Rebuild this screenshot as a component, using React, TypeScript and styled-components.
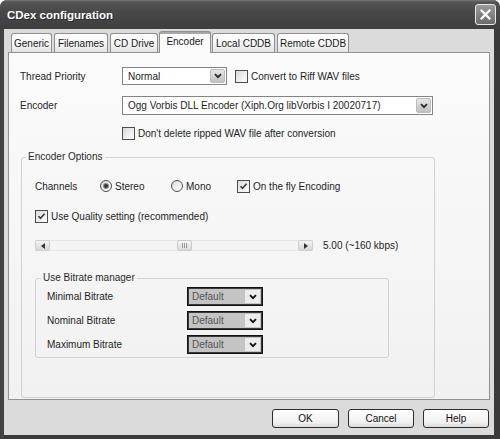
import React from "react";
import styled, { createGlobalStyle } from "styled-components";

const GlobalStyle = createGlobalStyle`
  html, body { margin: 0; padding: 0; background: #ffffff; }
  body { font-family: "Liberation Sans", Arial, sans-serif; font-size: 10px; color: #1e1e1e; }
  * { box-sizing: border-box; }
`;

const Window = styled.div`
  width: 500px;
  height: 439px;
  display: flex;
  flex-direction: column;
  background: linear-gradient(90deg, #3c3c3c, #4a4a4a 2px, #3a3a3a 4px);
  border-radius: 7px 7px 0 0;
  overflow: hidden;
`;

const TitleBar = styled.div`
  height: 29px;
  flex: none;
  display: flex;
  align-items: center;
  justify-content: space-between;
  padding: 0 4px 0 7px;
  background: linear-gradient(#7a7a7a 0px, #555 2px, #484848 40%, #3e3e3e 100%);
`;

const Title = styled.div`
  color: #fff;
  font-weight: bold;
  font-size: 11.5px;
  text-shadow: 1px 1px 0 #2a2a2a;
`;

const CloseButton = styled.div`
  width: 21px;
  height: 21px;
  border: 1px solid #e8e8e8;
  border-radius: 3px;
  background: linear-gradient(#9a9a9a, #6c6c6c);
  display: flex;
  align-items: center;
  justify-content: center;
`;

const Body = styled.div`
  flex: 1;
  margin: 0 6px 4px 4px;
  background: #dbdbdb;
  padding: 2px 4px 0 4px;
  display: flex;
  flex-direction: column;
`;

const TabRow = styled.div`
  height: 21px;
  display: flex;
  align-items: flex-end;
  padding-left: 3px;
`;

const Tab = styled.div<{ $w: number; $active?: boolean }>`
  position: relative;
  z-index: ${(p) => (p.$active ? 2 : 1)};
  width: ${(p) => p.$w + (p.$active ? 2 : 0)}px;
  height: ${(p) => (p.$active ? 22 : 19)}px;
  margin: ${(p) => (p.$active ? "0 1px -1px -1px" : "0 2px 0 0")};
  padding-bottom: ${(p) => (p.$active ? 3 : 0)}px;
  border: 1px solid #8e8e8e;
  border-bottom: none;
  border-radius: 3px 3px 0 0;
  background: ${(p) =>
    p.$active
      ? "linear-gradient(#a8a8a8 0px, #a8a8a8 2px, #fcfcfc 2px, #fbfbfb 100%)"
      : "linear-gradient(#ffffff, #f3f3f3 60%, #e4e4e4)"};
  display: flex;
  align-items: center;
  justify-content: center;
  font-size: 10px;
  color: #1a1a1a;
  white-space: nowrap;
`;

const Panel = styled.div`
  height: 348px;
  border: 1px solid #929292;
  background: linear-gradient(#fbfbfb, #f1f1f1);
  padding: 14px 0 0 11px;
  display: flex;
  flex-direction: column;
`;

const FormRow = styled.div<{ $mt?: number; $h: number; $indent?: number }>`
  display: flex;
  align-items: center;
  height: ${(p) => p.$h}px;
  margin-top: ${(p) => p.$mt ?? 0}px;
  padding-left: ${(p) => p.$indent ?? 0}px;
`;

const FieldLabel = styled.span<{ $w: number }>`
  width: ${(p) => p.$w}px;
  flex: none;
  white-space: nowrap;
`;

const Combo = styled.div<{ $w: number; $h: number }>`
  width: ${(p) => p.$w}px;
  height: ${(p) => p.$h}px;
  flex: none;
  border: 1px solid #858585;
  background: #ffffff;
  display: flex;
  align-items: stretch;
  padding: 1px;
`;

const ComboText = styled.span`
  flex: 1;
  display: flex;
  align-items: center;
  padding-left: 4px;
  white-space: nowrap;
  overflow: hidden;
`;

const ComboArrow = styled.span`
  width: 15px;
  flex: none;
  border: 1px solid #bcbcbc;
  border-radius: 2px;
  background: linear-gradient(#e6e6e6, #c0c0c0);
  display: flex;
  align-items: center;
  justify-content: center;
`;

const DarkCombo = styled.div`
  width: 76px;
  height: 19px;
  flex: none;
  border: 1px solid #111;
  box-shadow: inset 0 0 0 1px #3a3a3a;
  display: flex;
  align-items: stretch;
  padding: 2px;
  background: #c4c4c4;
`;

const DarkComboText = styled.span`
  flex: 1;
  display: flex;
  align-items: center;
  padding-left: 2px;
  color: #555;
`;

const DarkComboArrow = styled.span`
  width: 15px;
  flex: none;
  background: #ececec;
  display: flex;
  align-items: center;
  justify-content: center;
`;

const Option = styled.label<{ $w?: number; $ml?: number }>`
  display: flex;
  align-items: center;
  gap: 3px;
  width: ${(p) => (p.$w ? `${p.$w}px` : "auto")};
  margin-left: ${(p) => p.$ml ?? 0}px;
  flex: none;
  white-space: nowrap;
`;

const CheckBox = styled.span`
  width: 13px;
  height: 13px;
  flex: none;
  border: 1px solid #4c4c4c;
  background: linear-gradient(135deg, #d9d9d9, #f4f4f4 70%, #fdfdfd);
  display: flex;
  align-items: center;
  justify-content: center;
`;

const Radio = styled.span`
  width: 12px;
  height: 12px;
  flex: none;
  border: 1px solid #4c4c4c;
  border-radius: 50%;
  background: linear-gradient(135deg, #d9d9d9, #f6f6f6 70%, #ffffff);
  display: flex;
  align-items: center;
  justify-content: center;
`;

const RadioDot = styled.span`
  width: 4px;
  height: 4px;
  border-radius: 50%;
  background: #3a3a3a;
  box-shadow: 0 0 0 1px #8a8a8a;
`;

const GroupBox = styled.fieldset<{ $w: number; $mt: number; $ml?: number }>`
  margin: ${(p) => p.$mt}px 0 0 ${(p) => p.$ml ?? 0}px;
  width: ${(p) => p.$w}px;
  min-width: 0;
  padding: 0;
  border: 1px solid #d2d2d2;
  border-radius: 3px;
`;

const GroupTitle = styled.legend<{ $ml: number }>`
  padding: 0 2px;
  margin-left: ${(p) => p.$ml}px;
  font-size: 10px;
  line-height: 12px;
  color: #2a2a2a;
`;

const GroupInner = styled.div<{ $pad: string }>`
  padding: ${(p) => p.$pad};
  display: flex;
  flex-direction: column;
`;

const SliderRow = styled.div`
  display: flex;
  align-items: center;
  gap: 10px;
  margin-top: 17px;
  height: 11px;
`;

const ScrollBar = styled.div`
  width: 278px;
  height: 11px;
  display: flex;
  background: #f4f4f4;
  border-top: 1px solid #e6e6e6;
  border-bottom: 1px solid #e6e6e6;
`;

const ScrollButton = styled.span`
  width: 15px;
  flex: none;
  margin-top: -1px;
  margin-bottom: -1px;
  border: 1px solid #cfcfcf;
  border-radius: 2px;
  background: linear-gradient(#f4f4f4, #d6d6d6);
  display: flex;
  align-items: center;
  justify-content: center;
`;

const ScrollTrack = styled.div`
  flex: 1;
  position: relative;
`;

const ScrollThumb = styled.span`
  position: absolute;
  top: -1px;
  bottom: -1px;
  width: 15px;
  border: 1px solid #cacaca;
  border-radius: 2px;
  background: linear-gradient(#f6f6f6, #dadada);
  display: flex;
  align-items: center;
  justify-content: center;
  gap: 1px;
`;

const Grip = styled.span`
  width: 1px;
  height: 5px;
  background: #9a9a9a;
`;

const BitrateList = styled.div`
  display: flex;
  flex-direction: column;
  gap: 5px;
`;

const ButtonRow = styled.div`
  display: flex;
  justify-content: flex-end;
  gap: 9px;
  padding: 9px 1px 0 0;
`;

const Button = styled.button<{ $w: number }>`
  width: ${(p) => p.$w}px;
  height: 19px;
  padding: 0;
  border: 1px solid #2e2e2e;
  border-radius: 3px;
  background: linear-gradient(#ffffff, #f0f0f0 75%, #d8d8d8);
  font-family: "Liberation Sans", Arial, sans-serif;
  font-size: 10px;
  color: #111;
`;

const Chevron = ({ color = "#2a2a2a" }: { color?: string }) => (
  <svg width="8" height="6" viewBox="0 0 8 6">
    <path d="M1 1.2 L4 4.2 L7 1.2" fill="none" stroke={color} strokeWidth="1.8" />
  </svg>
);

const Check = () => (
  <svg width="9" height="9" viewBox="0 0 9 9">
    <path d="M1.5 4.2 L3.5 6.3 L7.6 1.8" fill="none" stroke="#3a3a3a" strokeWidth="1.6" />
  </svg>
);

const CloseX = () => (
  <svg width="11" height="11" viewBox="0 0 11 11">
    <path d="M1.5 1.5 L9.5 9.5 M9.5 1.5 L1.5 9.5" stroke="#fff" strokeWidth="2.2" strokeLinecap="square" />
  </svg>
);

const Triangle = ({ dir }: { dir: "left" | "right" }) => (
  <svg width="4" height="6" viewBox="0 0 4 6">
    <path d={dir === "left" ? "M4 0 L0 3 L4 6 Z" : "M0 0 L4 3 L0 6 Z"} fill="#333" />
  </svg>
);

const tabs = [
  { label: "Generic", w: 41 },
  { label: "Filenames", w: 54 },
  { label: "CD Drive", w: 48 },
  { label: "Encoder", w: 50, active: true },
  { label: "Local CDDB", w: 63 },
  { label: "Remote CDDB", w: 72 },
];

const bitrates = ["Minimal Bitrate", "Nominal Bitrate", "Maximum Bitrate"];

export default function App() {
  const quality = 5;
  const min = -1;
  const max = 10;
  const trackWidth = 248;
  const thumbLeft = Math.round(((quality - min) / (max - min)) * (trackWidth - 15) + 0.5) - 1;

  return (
    <>
      <GlobalStyle />
      <Window>
        <TitleBar>
          <Title>CDex configuration</Title>
          <CloseButton>
            <CloseX />
          </CloseButton>
        </TitleBar>
        <Body>
          <TabRow>
            {tabs.map((t) => (
              <Tab key={t.label} $w={t.w} $active={t.active}>
                {t.label}
              </Tab>
            ))}
          </TabRow>
          <Panel>
            <FormRow $h={18}>
              <FieldLabel $w={102}>Thread Priority</FieldLabel>
              <Combo $w={105} $h={18}>
                <ComboText>Normal</ComboText>
                <ComboArrow>
                  <Chevron />
                </ComboArrow>
              </Combo>
              <Option $ml={8}>
                <CheckBox />
                Convert to Riff WAV files
              </Option>
            </FormRow>
            <FormRow $h={19} $mt={11}>
              <FieldLabel $w={102}>Encoder</FieldLabel>
              <Combo $w={311} $h={19}>
                <ComboText>Ogg Vorbis DLL Encoder (Xiph.Org libVorbis I 20020717)</ComboText>
                <ComboArrow>
                  <Chevron />
                </ComboArrow>
              </Combo>
            </FormRow>
            <FormRow $h={13} $mt={12} $indent={102}>
              <Option>
                <CheckBox />
                Don't delete ripped WAV file after conversion
              </Option>
            </FormRow>

            <GroupBox $w={414} $mt={11} $ml={1}>
              <GroupTitle $ml={4}>Encoder Options</GroupTitle>
              <GroupInner $pad="16px 0 39px 13px">
                <FormRow $h={14}>
                  <FieldLabel $w={65}>Channels</FieldLabel>
                  <Option $w={71}>
                    <Radio>
                      <RadioDot />
                    </Radio>
                    Stereo
                  </Option>
                  <Option $w={66}>
                    <Radio />
                    Mono
                  </Option>
                  <Option>
                    <CheckBox>
                      <Check />
                    </CheckBox>
                    On the fly Encoding
                  </Option>
                </FormRow>
                <FormRow $h={13} $mt={17}>
                  <Option>
                    <CheckBox>
                      <Check />
                    </CheckBox>
                    Use Quality setting (recommended)
                  </Option>
                </FormRow>
                <SliderRow>
                  <ScrollBar>
                    <ScrollButton>
                      <Triangle dir="left" />
                    </ScrollButton>
                    <ScrollTrack>
                      <ScrollThumb style={{ left: `${thumbLeft}px` }}>
                        <Grip />
                        <Grip />
                        <Grip />
                      </ScrollThumb>
                    </ScrollTrack>
                    <ScrollButton>
                      <Triangle dir="right" />
                    </ScrollButton>
                  </ScrollBar>
                  <span>5.00 (~160 kbps)</span>
                </SliderRow>

                <GroupBox $w={354} $mt={21}>
                  <GroupTitle $ml={5}>Use Bitrate manager</GroupTitle>
                  <GroupInner $pad="3px 0 3px 11px">
                    <BitrateList>
                      {bitrates.map((b) => (
                        <FormRow key={b} $h={19}>
                          <FieldLabel $w={140}>{b}</FieldLabel>
                          <DarkCombo>
                            <DarkComboText>Default</DarkComboText>
                            <DarkComboArrow>
                              <Chevron color="#111" />
                            </DarkComboArrow>
                          </DarkCombo>
                        </FormRow>
                      ))}
                    </BitrateList>
                  </GroupInner>
                </GroupBox>
              </GroupInner>
            </GroupBox>
          </Panel>
          <ButtonRow>
            <Button $w={67}>OK</Button>
            <Button $w={66}>Cancel</Button>
            <Button $w={66}>Help</Button>
          </ButtonRow>
        </Body>
      </Window>
    </>
  );
}
